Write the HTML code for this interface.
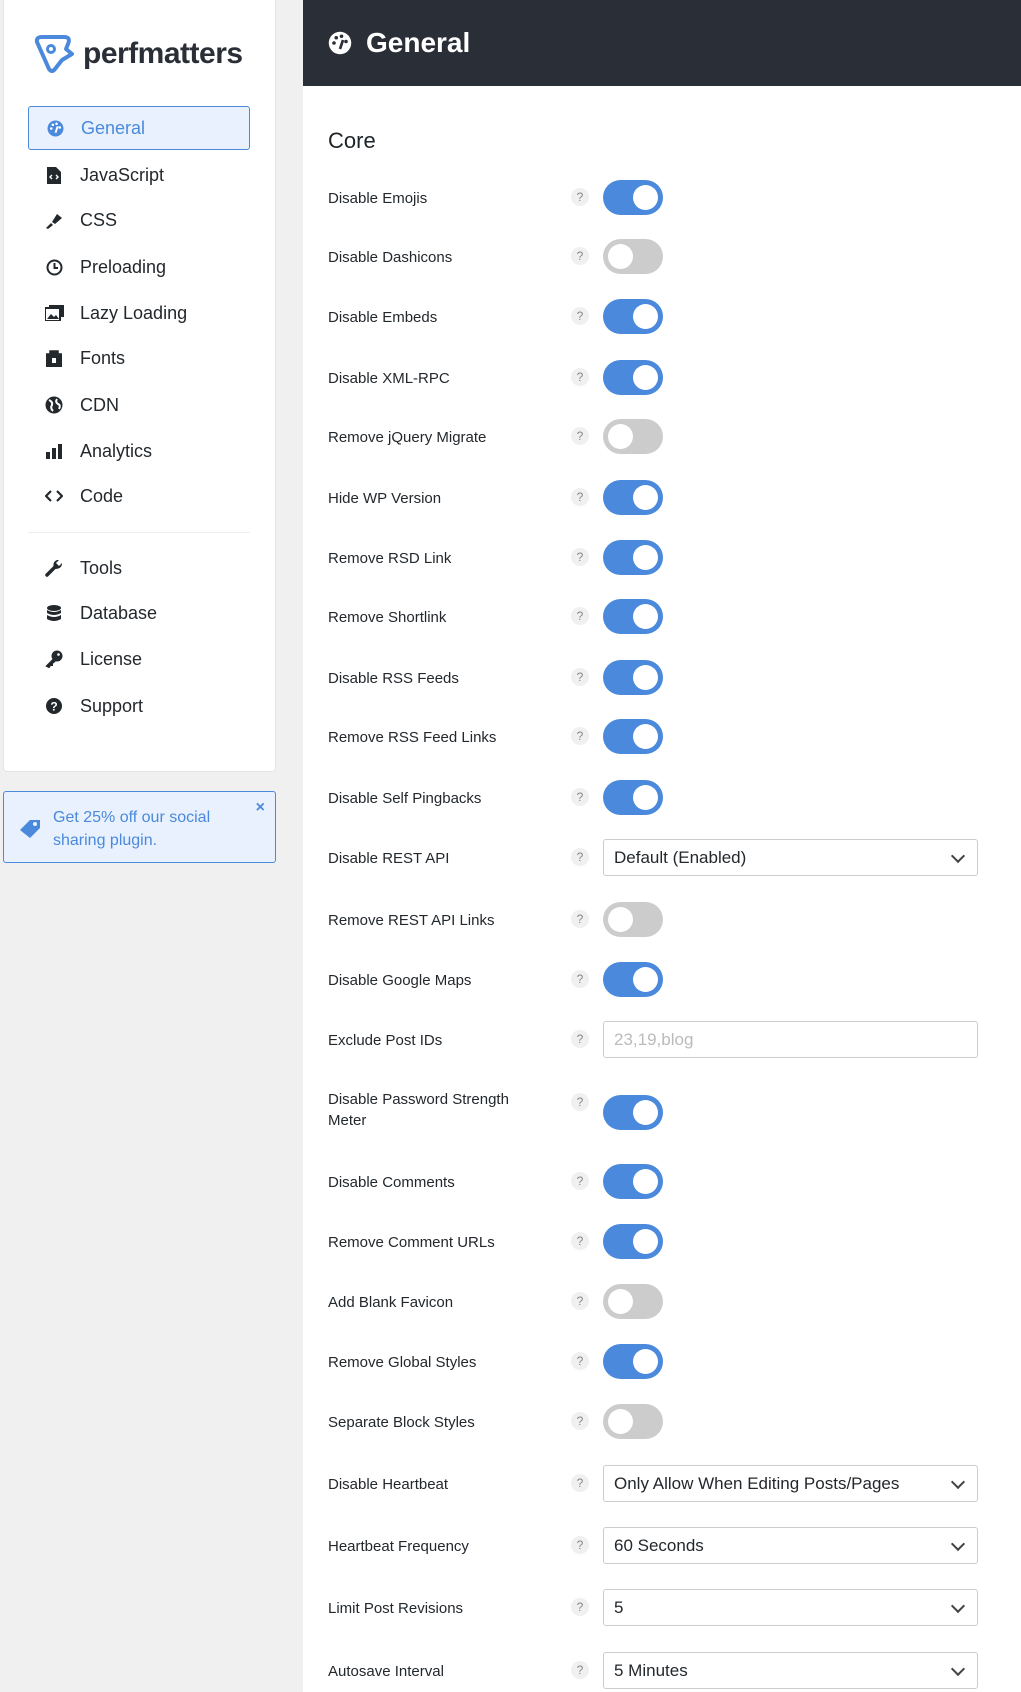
<!DOCTYPE html>
<html><head><meta charset="utf-8"><style>
*{box-sizing:border-box;margin:0;padding:0}
body{width:1021px;height:1692px;background:#f0f0f1;font-family:"Liberation Sans",sans-serif;position:relative;overflow:hidden;color:#1d2327}
.side{position:absolute;left:3px;top:0;width:273px;height:772px;background:#fff;border:1px solid #e2e4e7;border-top:none;border-radius:0 0 4px 4px}
.logo{position:absolute;left:29px;top:32px;display:flex;align-items:center}
.logo span{font-size:30px;font-weight:bold;color:#2a2e36;margin-left:6px;letter-spacing:-0.5px}
.nav{position:absolute;left:28px;width:222px;height:44px;display:flex;align-items:center;font-size:18px;color:#23282d}
.nav .ic{width:52px;display:flex;justify-content:center}
.nav.act{background:#e8f1fd;border:1px solid #4a89dc;border-radius:3px;color:#4a89dc}
.div{position:absolute;left:28px;top:532px;width:222px;height:1px;background:#eee}
.promo{position:absolute;left:3px;top:791px;width:273px;height:72px;background:#e8f1fd;border:1px solid #4a89dc;border-radius:3px;color:#4a89dc;font-size:16px;line-height:23px}
.main{position:absolute;left:303px;top:0;width:718px;height:1692px;background:#fff}
.hdr{height:86px;background:#2a2e36;color:#fff;display:flex;align-items:center;padding-left:25px;font-size:28px;font-weight:bold}
.core{position:absolute;left:25px;top:128px;font-size:22px}
.row{position:absolute;left:0;width:718px;height:40px}
.lbl{position:absolute;left:25px;top:0;height:40px;display:flex;align-items:center;font-size:15px;color:#23282d;line-height:21px}
.q{position:absolute;left:268px;top:10px;width:18px;height:18px;border-radius:50%;background:#f0f0f1;color:#888;font-size:12px;text-align:center;line-height:18px}
.tg{position:absolute;left:300px;top:2px;width:60px;height:35px;border-radius:18px;background:#4a89dc}
.tg:after{content:"";position:absolute;top:5px;left:30px;width:25px;height:25px;border-radius:50%;background:#fff}
.tg.off{background:#ccc}.tg.off:after{left:5px}
.sel{position:absolute;left:300px;top:1px;width:375px;height:37px;border:1px solid #ccc;border-radius:3px;font-size:17px;padding-left:10px;line-height:35px;color:#23282d}
.sel:after{content:"";position:absolute;right:14px;top:11px;width:8px;height:8px;border-right:2px solid #444;border-bottom:2px solid #444;transform:rotate(45deg)}
.sel.in{color:#bbb}.sel.in:after{display:none}
</style></head><body>
<div class="side">
<div class="logo"><svg width="44" height="44" viewBox="0 0 44 44"><path d="M4 10 Q3 5 9 5 L31 5 Q38 5 35 12 L33 17 L39 22 L29 28 L22 37 Q19 41 16 37 Z" fill="none" stroke="#4a89dc" stroke-width="4" stroke-linejoin="round"/><circle cx="18" cy="17" r="3.5" fill="none" stroke="#4a89dc" stroke-width="3"/></svg><span>perfmatters</span></div>
</div>
<svg width="0" height="0" style="position:absolute"><defs>
<symbol id="gauge" viewBox="0 0 16 16"><circle cx="8" cy="8" r="7.5" fill="currentColor"/><circle cx="4" cy="8" r="1.2" fill="#fff"/><circle cx="5.5" cy="4.5" r="1.2" fill="#fff"/><circle cx="9" cy="3.5" r="1.2" fill="#fff"/><circle cx="12" cy="7" r="1.2" fill="#fff"/><path d="M8 12 L10 6" stroke="#fff" stroke-width="1.8"/></symbol>
</defs></svg>
<div class="nav act" style="top:106px"><div class="ic" style="color:#4a89dc"><svg width="17" height="17"><use href="#gauge"/></svg></div>General</div>
<div class="nav" style="top:153px"><div class="ic"><svg width="14" height="17" viewBox="0 0 14 17"><path d="M0 0H9L14 5V17H0Z" fill="#23282d"/><path d="M5 8L3 10L5 12M9 8L11 10L9 12" stroke="#fff" stroke-width="1.4" fill="none"/></svg></div>JavaScript</div>
<div class="nav" style="top:198px"><div class="ic"><svg width="18" height="18" viewBox="0 0 18 18"><path d="M1 17L6 12L8 14L3 18Z M7 11L12 3L17 7L10 13Z" fill="#23282d"/></svg></div>CSS</div>
<div class="nav" style="top:245px"><div class="ic"><svg width="17" height="17" viewBox="0 0 17 17"><circle cx="8.5" cy="8.5" r="7" fill="none" stroke="#23282d" stroke-width="2"/><path d="M8.5 4V9H12" stroke="#23282d" stroke-width="2" fill="none"/></svg></div>Preloading</div>
<div class="nav" style="top:291px"><div class="ic"><svg width="19" height="16" viewBox="0 0 19 16"><rect x="4" y="0" width="15" height="12" fill="#23282d"/><rect x="0" y="3" width="15" height="13" fill="#fff" stroke="#23282d" stroke-width="2"/><path d="M2 14L6 9L9 12L11 10L14 14Z" fill="#23282d"/></svg></div>Lazy Loading</div>
<div class="nav" style="top:336px"><div class="ic"><svg width="16" height="17" viewBox="0 0 16 17"><path d="M0 4H16V17H0Z M4 4V1H12V4" fill="#23282d" stroke="#23282d" stroke-width="1.5"/><rect x="6" y="8" width="4" height="5" fill="#fff"/></svg></div>Fonts</div>
<div class="nav" style="top:383px"><div class="ic"><svg width="18" height="18" viewBox="0 0 18 18"><circle cx="9" cy="9" r="8.5" fill="#23282d"/><path d="M4 4Q8 6 7 9Q5 12 8 15M12 3Q10 6 13 8Q16 9 14 13" stroke="#fff" stroke-width="2" fill="none"/></svg></div>CDN</div>
<div class="nav" style="top:429px"><div class="ic"><svg width="16" height="15" viewBox="0 0 16 15"><rect x="0" y="8" width="4" height="7" fill="#23282d"/><rect x="6" y="4" width="4" height="11" fill="#23282d"/><rect x="12" y="0" width="4" height="15" fill="#23282d"/></svg></div>Analytics</div>
<div class="nav" style="top:474px"><div class="ic"><svg width="18" height="12" viewBox="0 0 18 12"><path d="M6 1L1 6L6 11M12 1L17 6L12 11" stroke="#23282d" stroke-width="2.2" fill="none"/></svg></div>Code</div>
<div class="div"></div>
<div class="nav" style="top:546px"><div class="ic"><svg width="18" height="18" viewBox="0 0 18 18"><path d="M2 16L10 8" stroke="#23282d" stroke-width="3.5" stroke-linecap="round"/><path d="M9 9Q7 3 12 1L14 1L11 4L14 7L17 4Q17 10 10 10Z" fill="#23282d"/></svg></div>Tools</div>
<div class="nav" style="top:591px"><div class="ic"><svg width="14" height="17" viewBox="0 0 14 17"><ellipse cx="7" cy="3" rx="7" ry="3" fill="#23282d"/><path d="M0 5Q7 9 14 5V8Q7 12 0 8Z M0 10Q7 14 14 10V14Q7 18 0 14Z" fill="#23282d"/></svg></div>Database</div>
<div class="nav" style="top:637px"><div class="ic"><svg width="18" height="18" viewBox="0 0 18 18"><circle cx="12" cy="6" r="5.5" fill="#23282d"/><path d="M9 9L2 16L4 17L5 15L7 15L7 13L10 11" fill="#23282d" stroke="#23282d" stroke-width="2"/><circle cx="13.5" cy="4.5" r="1.3" fill="#fff"/></svg></div>License</div>
<div class="nav" style="top:684px"><div class="ic"><svg width="16" height="16" viewBox="0 0 16 16"><circle cx="8" cy="8" r="8" fill="#23282d"/><text x="8" y="12.5" font-size="12" font-weight="bold" fill="#fff" text-anchor="middle" font-family="Liberation Sans">?</text></svg></div>Support</div>
<div class="promo"><svg style="position:absolute;left:14px;top:24px" width="24" height="22" viewBox="0 0 24 22"><path d="M2 14 L12 4 L22 4 L22 12 L12 22 Z" fill="#4a89dc"/><circle cx="17" cy="8" r="2" fill="#e8f1fd"/></svg><div style="position:absolute;left:49px;top:14px;width:180px">Get 25% off our social sharing plugin.</div><div style="position:absolute;right:10px;top:4px;font-size:16px;font-weight:bold">×</div></div>
<div class="main">
<div class="hdr"><svg width="24" height="24" viewBox="0 0 16 16" style="margin-right:14px"><circle cx="8" cy="8" r="7.5" fill="#fff"/><circle cx="4" cy="8" r="1.2" fill="#2a2e36"/><circle cx="5.5" cy="4.5" r="1.2" fill="#2a2e36"/><circle cx="9" cy="3.5" r="1.2" fill="#2a2e36"/><circle cx="12" cy="7" r="1.2" fill="#2a2e36"/><path d="M8 12 L10 6" stroke="#2a2e36" stroke-width="1.8"/></svg>General</div>
<div class="core">Core</div>
<div class="row" style="top:178px"><div class="lbl">Disable Emojis</div><div class="q">?</div><div class="tg"></div></div>
<div class="row" style="top:237px"><div class="lbl">Disable Dashicons</div><div class="q">?</div><div class="tg off"></div></div>
<div class="row" style="top:297px"><div class="lbl">Disable Embeds</div><div class="q">?</div><div class="tg"></div></div>
<div class="row" style="top:358px"><div class="lbl">Disable XML-RPC</div><div class="q">?</div><div class="tg"></div></div>
<div class="row" style="top:417px"><div class="lbl">Remove jQuery Migrate</div><div class="q">?</div><div class="tg off"></div></div>
<div class="row" style="top:478px"><div class="lbl">Hide WP Version</div><div class="q">?</div><div class="tg"></div></div>
<div class="row" style="top:538px"><div class="lbl">Remove RSD Link</div><div class="q">?</div><div class="tg"></div></div>
<div class="row" style="top:597px"><div class="lbl">Remove Shortlink</div><div class="q">?</div><div class="tg"></div></div>
<div class="row" style="top:658px"><div class="lbl">Disable RSS Feeds</div><div class="q">?</div><div class="tg"></div></div>
<div class="row" style="top:717px"><div class="lbl">Remove RSS Feed Links</div><div class="q">?</div><div class="tg"></div></div>
<div class="row" style="top:778px"><div class="lbl">Disable Self Pingbacks</div><div class="q">?</div><div class="tg"></div></div>
<div class="row" style="top:838px"><div class="lbl">Disable REST API</div><div class="q">?</div><div class="sel">Default (Enabled)</div></div>
<div class="row" style="top:900px"><div class="lbl">Remove REST API Links</div><div class="q">?</div><div class="tg off"></div></div>
<div class="row" style="top:960px"><div class="lbl">Disable Google Maps</div><div class="q">?</div><div class="tg"></div></div>
<div class="row" style="top:1020px"><div class="lbl">Exclude Post IDs</div><div class="q">?</div><div class="sel in">23,19,blog</div></div>
<div class="row" style="top:1093px"><div class="lbl" style="top:-3px;width:220px">Disable Password Strength Meter</div><div class="q" style="top:0px">?</div><div class="tg"></div></div>
<div class="row" style="top:1162px"><div class="lbl">Disable Comments</div><div class="q">?</div><div class="tg"></div></div>
<div class="row" style="top:1222px"><div class="lbl">Remove Comment URLs</div><div class="q">?</div><div class="tg"></div></div>
<div class="row" style="top:1282px"><div class="lbl">Add Blank Favicon</div><div class="q">?</div><div class="tg off"></div></div>
<div class="row" style="top:1342px"><div class="lbl">Remove Global Styles</div><div class="q">?</div><div class="tg"></div></div>
<div class="row" style="top:1402px"><div class="lbl">Separate Block Styles</div><div class="q">?</div><div class="tg off"></div></div>
<div class="row" style="top:1464px"><div class="lbl">Disable Heartbeat</div><div class="q">?</div><div class="sel">Only Allow When Editing Posts/Pages</div></div>
<div class="row" style="top:1526px"><div class="lbl">Heartbeat Frequency</div><div class="q">?</div><div class="sel">60 Seconds</div></div>
<div class="row" style="top:1588px"><div class="lbl">Limit Post Revisions</div><div class="q">?</div><div class="sel">5</div></div>
<div class="row" style="top:1651px"><div class="lbl">Autosave Interval</div><div class="q">?</div><div class="sel">5 Minutes</div></div>
</div>
</body></html>
